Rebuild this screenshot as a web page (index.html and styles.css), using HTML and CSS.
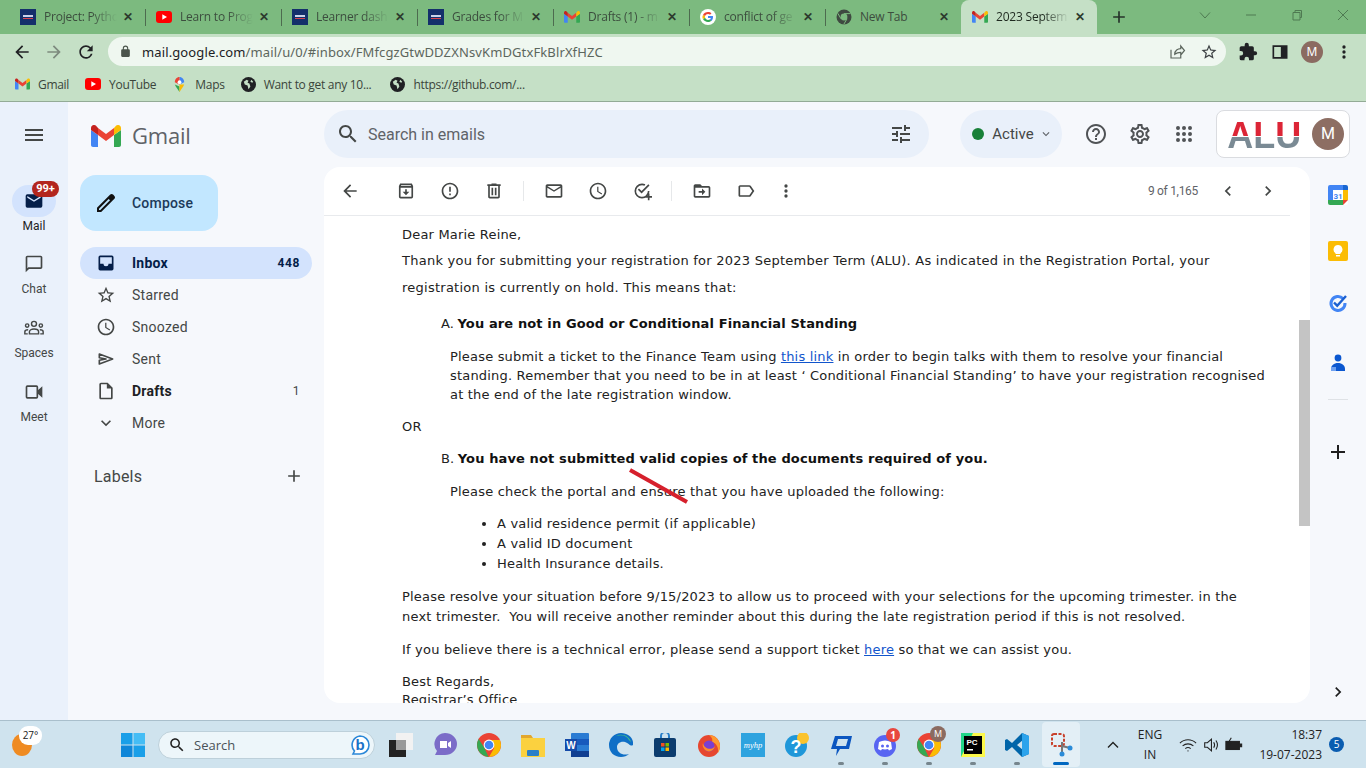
FILE: index.html
```html
<!DOCTYPE html>
<html lang="en">
<head>
  <meta charset="UTF-8" />
  <meta name="viewport" content="width=device-width, initial-scale=1" />
  <title>2023 September Term - Gmail</title>
  <link rel="stylesheet" href="styles.css">
</head>
<body>

  <svg class="sprite" aria-hidden="true">
    <symbol id="i-gmail" viewBox="0 0 30 22">
      <path fill="#4285f4" d="M2 22h5V10L0 5v15c0 1.1.9 2 2 2z"/>
      <path fill="#34a853" d="M23 22h5c1.1 0 2-.9 2-2V5l-7 5z"/>
      <path fill="#ea4335" d="M7 10V3l8 6 8-6v7l-8 6z"/>
      <path fill="#fbbc04" d="M23 3v7l7-5V3c0-2.5-2.8-3.9-4.8-2.4z"/>
      <path fill="#c5221f" d="M0 5l7 5V3L4.8.6C2.8-.9 0 .5 0 3z"/>
    </symbol>
    <symbol id="i-alu" viewBox="0 0 16 16">
      <rect width="16" height="16" fill="#14306b"/>
      <rect x="3" y="6" width="10" height="2" fill="#c9d3ea"/>
      <rect x="3" y="9" width="10" height="1" fill="#d9434e"/>
    </symbol>
    <symbol id="i-yt" viewBox="0 0 16 12">
      <rect width="16" height="12" rx="3" fill="#f00"/>
      <path fill="#fff" d="M6.3 3.3v5.4L11 6z"/>
    </symbol>
    <symbol id="i-google" viewBox="0 0 16 16">
      <circle cx="8" cy="8" r="8" fill="#fff"/>
      <path fill="#4285f4" d="M13 8.1c0-.4 0-.8-.1-1.100H8v2.100h2.800c-.1.7-.5 1.200-1 1.600l1.600 1.300c1-.9 1.600-2.200 1.600-3.900z"/>
      <path fill="#34a853" d="M8 13c1.400 0 2.500-.5 3.400-1.300l-1.600-1.300c-.5.3-1.100.5-1.800.5-1.300 0-2.500-.9-2.900-2.100L3 10.100C3.800 11.800 5.800 13 8 13z"/>
      <path fill="#fbbc05" d="M5.100 8.800C4.900 8.200 4.900 7.700 5.100 7.100L3 5.900c-.7 1.300-.7 2.900 0 4.200z"/>
      <path fill="#ea4335" d="M8 5c.8 0 1.500.3 2 .8l1.500-1.500C10.600 3.500 9.400 3 8 3 5.800 3 3.800 4.200 3 5.900l2.100 1.200C5.500 5.900 6.700 5 8 5z"/>
    </symbol>
    <symbol id="i-chromegray" viewBox="0 0 16 16">
      <circle cx="8" cy="8" r="7.5" fill="#3f4a41"/>
      <circle cx="8" cy="8" r="3.4" fill="#7cba7f"/>
      <path d="M8 4.600h6.500M5 9.800 1.800 4.300M11 9.800 7.800 15.300" stroke="#7cba7f" stroke-width="1"/>
    </symbol>
    <symbol id="i-globe" viewBox="0 0 16 16">
      <circle cx="8" cy="8" r="8" fill="#202124"/>
      <path fill="#c5e0c6" d="M3 5l3-2 2 1-1 2 2 1 1 3-2 3-1-4-3-1zM11 3l2 2-1 1-2-1z"/>
    </symbol>
    <symbol id="i-chrome" viewBox="0 0 24 24">
      <circle cx="12" cy="12" r="12" fill="#ea4335"/>
      <path fill="#34a853" d="M1.600 6 7.500 15l4 8.900A12 12 0 0 1 1.600 6z"/>
      <path fill="#fbbc04" d="M12 24 17.200 15 12 7h10.900A12 12 0 0 1 12 24z"/>
      <circle cx="12" cy="12" r="5.4" fill="#fff"/>
      <circle cx="12" cy="12" r="4.3" fill="#4285f4"/>
    </symbol>
    <symbol id="i-search" viewBox="0 0 24 24"><path d="M15.5 14h-.79l-.28-.27C15.41 12.59 16 11.11 16 9.5 16 5.91 13.09 3 9.5 3S3 5.91 3 9.5 5.91 16 9.5 16c1.61 0 3.09-.59 4.23-1.57l.27.28v.79l5 4.99L20.49 19l-4.99-5zm-6 0C7.01 14 5 11.99 5 9.5S7.01 5 9.5 5 14 7.01 14 9.5 11.99 14 9.5 14z"/></symbol>
    <symbol id="i-tune" viewBox="0 0 24 24"><path d="M3 17v2h6v-2H3zM3 5v2h10V5H3zm10 16v-2h8v-2h-8v-2h-2v6h2zM7 9v2H3v2h4v2h2V9H7zm14 4v-2H11v2h10zm-6-4h2V7h4V5h-4V3h-2v6z"/></symbol>
    <symbol id="i-help" viewBox="0 0 24 24"><path d="M11 18h2v-2h-2v2zm1-16C6.48 2 2 6.48 2 12s4.48 10 10 10 10-4.48 10-10S17.52 2 12 2zm0 18c-4.41 0-8-3.59-8-8s3.59-8 8-8 8 3.59 8 8-3.59 8-8 8zm0-14c-2.21 0-4 1.79-4 4h2c0-1.1.9-2 2-2s2 .9 2 2c0 2-3 1.75-3 5h2c0-2.25 3-2.5 3-5 0-2.21-1.79-4-4-4z"/></symbol>
    <symbol id="i-gear" viewBox="0 0 24 24"><path d="M19.43 12.98c.04-.32.07-.64.07-.98 0-.34-.03-.66-.07-.98l2.11-1.65c.19-.15.24-.42.12-.64l-2-3.46c-.09-.16-.26-.25-.44-.25-.06 0-.12.01-.17.03l-2.49 1c-.52-.4-1.08-.73-1.69-.98l-.38-2.65C14.46 2.18 14.25 2 14 2h-4c-.25 0-.46.18-.49.42l-.38 2.65c-.61.25-1.17.59-1.69.98l-2.49-1c-.06-.02-.12-.03-.18-.03-.17 0-.34.09-.43.25l-2 3.46c-.13.22-.07.49.12.64l2.11 1.65c-.04.32-.07.65-.07.98 0 .33.03.66.07.98l-2.11 1.65c-.19.15-.24.42-.12.64l2 3.46c.09.16.26.25.44.25.06 0 .12-.01.17-.03l2.49-1c.52.4 1.08.73 1.69.98l.38 2.65c.03.24.24.42.49.42h4c.25 0 .46-.18.49-.42l.38-2.65c.61-.25 1.17-.59 1.69-.98l2.49 1c.06.02.12.03.18.03.17 0 .34-.09.43-.25l2-3.46c.12-.22.07-.49-.12-.64l-2.11-1.65zm-1.98-1.71c.04.31.05.52.05.73 0 .21-.02.43-.05.73l-.14 1.13.89.7 1.08.84-.7 1.21-1.27-.51-1.04-.42-.9.68c-.43.32-.84.56-1.25.73l-1.06.43-.16 1.13-.2 1.35h-1.4l-.19-1.35-.16-1.13-1.06-.43c-.43-.18-.83-.41-1.23-.71l-.91-.7-1.06.43-1.27.51-.7-1.21 1.08-.84.89-.7-.14-1.13c-.03-.31-.05-.54-.05-.74s.02-.43.05-.73l.14-1.13-.89-.7-1.08-.84.7-1.21 1.27.51 1.04.42.9-.68c.43-.32.84-.56 1.25-.73l1.06-.43.16-1.13.2-1.35h1.39l.19 1.35.16 1.13 1.06.43c.43.18.83.41 1.23.71l.91.7 1.06-.43 1.27-.51.7 1.21-1.07.85-.89.7.14 1.13zM12 8c-2.21 0-4 1.79-4 4s1.79 4 4 4 4-1.79 4-4-1.79-4-4-4zm0 6c-1.1 0-2-.9-2-2s.9-2 2-2 2 .9 2 2-.9 2-2 2z"/></symbol>
    <symbol id="i-apps" viewBox="0 0 24 24"><path d="M6 8a2 2 0 1 0 0-4 2 2 0 0 0 0 4zm6 0a2 2 0 1 0 0-4 2 2 0 0 0 0 4zm6 0a2 2 0 1 0 0-4 2 2 0 0 0 0 4zM6 14a2 2 0 1 0 0-4 2 2 0 0 0 0 4zm6 0a2 2 0 1 0 0-4 2 2 0 0 0 0 4zm6 0a2 2 0 1 0 0-4 2 2 0 0 0 0 4zM6 20a2 2 0 1 0 0-4 2 2 0 0 0 0 4zm6 0a2 2 0 1 0 0-4 2 2 0 0 0 0 4zm6 0a2 2 0 1 0 0-4 2 2 0 0 0 0 4z"/></symbol>
    <symbol id="i-menu" viewBox="0 0 24 24"><path d="M3 18h18v-2H3v2zm0-5h18v-2H3v2zm0-7v2h18V6H3z"/></symbol>
    <symbol id="i-back" viewBox="0 0 24 24"><path d="M20 11H7.83l5.59-5.59L12 4l-8 8 8 8 1.41-1.41L7.83 13H20v-2z"/></symbol>
    <symbol id="i-archive" viewBox="0 0 24 24"><path d="M5 3h14l1.500 3v13a2 2 0 0 1-2 2h-13a2 2 0 0 1-2-2V6zM5.500 8v11h13V8zm.3-2h12.400l-.5-1H6.300zM11 10h2v3h3l-4 4-4-4h3z"/></symbol>
    <symbol id="i-report" viewBox="0 0 24 24"><path d="M11 15h2v2h-2zm0-8h2v6h-2zm1-5C6.47 2 2 6.48 2 12s4.47 10 10 10 10-4.48 10-10S17.53 2 12 2zm0 18c-4.42 0-8-3.58-8-8s3.58-8 8-8 8 3.58 8 8-3.58 8-8 8z"/></symbol>
    <symbol id="i-delete" viewBox="0 0 24 24"><path d="M15 4V3H9v1H4v2h1v13c0 1.1.9 2 2 2h10c1.1 0 2-.9 2-2V6h1V4h-5zm2 15H7V6h10v13zM9 8h2v9H9zm4 0h2v9h-2z"/></symbol>
    <symbol id="i-mail" viewBox="0 0 24 24"><path d="M20 4H4c-1.1 0-2 .9-2 2v12c0 1.1.9 2 2 2h16c1.1 0 2-.9 2-2V6c0-1.1-.9-2-2-2zm0 14H4V8l8 5 8-5v10zm-8-7L4 6h16l-8 5z"/></symbol>
    <symbol id="i-clock" viewBox="0 0 24 24"><path d="M11.99 2C6.47 2 2 6.48 2 12s4.47 10 9.990 10C17.52 22 22 17.52 22 12S17.52 2 11.990 2zM12 20c-4.420 0-8-3.580-8-8s3.580-8 8-8 8 3.580 8 8-3.580 8-8 8zm.5-13H11v6l5.250 3.150.75-1.230-4.500-2.670z"/></symbol>
    <symbol id="i-addtask" viewBox="0 0 24 24"><path d="M12 3a9 9 0 0 1 4 .9l-1 1.800A7 7 0 1 0 19 12h2a9 9 0 0 1-9 9 9 9 0 0 1 0-18zm7.600 1L21 5.400l-9.500 9.500L7 10.400 8.400 9l3.100 3.100zM19 15h2v3h3v2h-3v3h-2v-3h-3v-2h3z"/></symbol>
    <symbol id="i-move" viewBox="0 0 24 24"><path d="M20 6h-8l-2-2H4c-1.1 0-2 .9-2 2v12c0 1.1.9 2 2 2h16c1.1 0 2-.9 2-2V8c0-1.1-.9-2-2-2zm0 12H4V8h16v10zm-8-1 4-4-4-4v3H8v2h4z"/></symbol>
    <symbol id="i-label" viewBox="0 0 24 24"><path d="M17.63 5.84C17.27 5.33 16.67 5 16 5L5 5.010C3.900 5.010 3 5.900 3 7v10c0 1.100.9 1.990 2 1.990L16 19c.67 0 1.270-.33 1.630-.84L22 12l-4.370-6.160zM16 17H5V7h11l3.550 5L16 17z"/></symbol>
    <symbol id="i-more" viewBox="0 0 24 24"><path d="M12 8a2 2 0 1 0 0-4 2 2 0 0 0 0 4zm0 2a2 2 0 1 0 0 4 2 2 0 0 0 0-4zm0 6a2 2 0 1 0 0 4 2 2 0 0 0 0-4z"/></symbol>
    <symbol id="i-left" viewBox="0 0 24 24"><path d="M15.41 7.41 14 6l-6 6 6 6 1.41-1.41L10.83 12z"/></symbol>
    <symbol id="i-right" viewBox="0 0 24 24"><path d="M10 6 8.590 7.410 13.170 12l-4.580 4.590L10 18l6-6z"/></symbol>
    <symbol id="i-down" viewBox="0 0 24 24"><path d="M16.59 8.590 12 13.170 7.410 8.590 6 10l6 6 6-6z"/></symbol>
    <symbol id="i-plus" viewBox="0 0 24 24"><path d="M19 13h-6v6h-2v-6H5v-2h6V5h2v6h6v2z"/></symbol>
    <symbol id="i-pencil" viewBox="0 0 24 24"><path d="M20.41 4.940l-1.350-1.350c-.78-.78-2.050-.78-2.830 0L3 16.820V21h4.180L20.410 7.770c.79-.78.79-2.050 0-2.830zM6.350 19H5v-1.350l9.660-9.660 1.350 1.350L6.350 19z"/></symbol>
    <symbol id="i-inbox" viewBox="0 0 24 24"><path d="M19 3H5a2 2 0 0 0-2 2v14a2 2 0 0 0 2 2h14a2 2 0 0 0 2-2V5a2 2 0 0 0-2-2zm0 10h-4a3 3 0 0 1-6 0H5V5h14z"/></symbol>
    <symbol id="i-star" viewBox="0 0 24 24"><path d="M22 9.240l-7.190-.62L12 2 9.190 8.630 2 9.240l5.460 4.730L5.820 21 12 17.270 18.180 21l-1.630-7.030L22 9.240zM12 15.400l-3.760 2.270 1-4.280-3.320-2.880 4.380-.38L12 6.100l1.710 4.040 4.380.38-3.320 2.880 1 4.280L12 15.400z"/></symbol>
    <symbol id="i-sent" viewBox="0 0 24 24"><path fill="none" stroke="#444746" stroke-width="2" stroke-linejoin="round" d="M4 6 20 12 4 18v-4.500L12 12 4 10.500z"/></symbol>
    <symbol id="i-draft" viewBox="0 0 24 24"><path d="M14 2H6c-1.1 0-2 .9-2 2v16c0 1.1.9 2 2 2h12c1.1 0 2-.9 2-2V8l-6-6zM6 20V4h7v5h5v11H6z"/></symbol>
    <symbol id="i-mailfill" viewBox="0 0 24 24"><path d="M20 4H4a2 2 0 0 0-2 2v12a2 2 0 0 0 2 2h16a2 2 0 0 0 2-2V6a2 2 0 0 0-2-2zm0 4-8 5-8-5V6l8 5 8-5z"/></symbol>
    <symbol id="i-chat" viewBox="0 0 24 24"><path d="M20 2H4c-1.1 0-2 .9-2 2v18l4-4h14c1.1 0 2-.9 2-2V4c0-1.1-.9-2-2-2zm0 14H5.170L4 17.170V4h16v12z"/></symbol>
    <symbol id="i-spaces" viewBox="0 0 24 24">
      <g fill="none" stroke="#444746" stroke-width="1.700">
        <circle cx="12" cy="7" r="3"/><circle cx="3.800" cy="9" r="2"/><circle cx="20.200" cy="9" r="2"/>
        <path d="M6.500 19v-2.500c0-2 2.500-3.300 5.500-3.300s5.500 1.300 5.500 3.300V19zM4.500 19H1v-2.500c0-1.500 1.500-2.500 4-2.500M19.500 19H23v-2.500c0-1.500-1.500-2.500-4-2.500"/>
      </g>
    </symbol>
    <symbol id="i-video" viewBox="0 0 24 24"><path d="M15 4H4a2 2 0 0 0-2 2v12a2 2 0 0 0 2 2h11a2 2 0 0 0 2-2v-3.500l5 4.500V5l-5 4.500V6a2 2 0 0 0-2-2zM4 6h11v12H4z"/></symbol>
    <symbol id="i-lock" viewBox="0 0 24 24"><path d="M18 8h-1V6a5 5 0 0 0-10 0v2H6a2 2 0 0 0-2 2v10a2 2 0 0 0 2 2h12a2 2 0 0 0 2-2V10a2 2 0 0 0-2-2zM9 6a3 3 0 0 1 6 0v2H9z"/></symbol>
    <symbol id="i-reload" viewBox="0 0 24 24"><path d="M17.65 6.350A7.958 7.958 0 0 0 12 4c-4.420 0-7.990 3.580-7.990 8s3.570 8 7.990 8c3.730 0 6.840-2.550 7.730-6h-2.080A5.990 5.990 0 0 1 12 18c-3.310 0-6-2.690-6-6s2.690-6 6-6c1.660 0 3.140.69 4.220 1.780L13 11h7V4l-2.350 2.350z"/></symbol>
    <symbol id="i-share" viewBox="0 0 24 24"><path d="M4 9v11h13v-5M9 15c0-5 4-7.500 8-7.500V4l5 6-5 6v-3.500c-3.500 0-6 1-8 2.500z" fill="none" stroke="currentColor" stroke-width="1.600"/></symbol>
    <symbol id="i-puzzle" viewBox="0 0 24 24"><path d="M20.500 11H19V7a2 2 0 0 0-2-2h-4V3.500a2.500 2.500 0 0 0-5 0V5H4a2 2 0 0 0-2 2v3.800h1.500a2.700 2.700 0 0 1 0 5.400H2V20a2 2 0 0 0 2 2h3.800v-1.500a2.700 2.700 0 0 1 5.400 0V22H17a2 2 0 0 0 2-2v-4h1.500a2.500 2.500 0 0 0 0-5z"/></symbol>
    <symbol id="i-panel" viewBox="0 0 24 24"><path d="M3 4h18v16H3zm2 2v12h8V6z" fill-rule="evenodd"/></symbol>
  </svg>

  <!-- barra de pestañas -->
  <div class="tabstrip">
    <div class="tab"><svg class="tab-icon"><use href="#i-alu"/></svg><span class="tab-title">Project: Pytho</span><span class="tab-close">✕</span></div>
    <div class="tab"><svg class="tab-icon"><use href="#i-yt"/></svg><span class="tab-title">Learn to Prog</span><span class="tab-close">✕</span></div>
    <div class="tab"><svg class="tab-icon"><use href="#i-alu"/></svg><span class="tab-title">Learner dash</span><span class="tab-close">✕</span></div>
    <div class="tab"><svg class="tab-icon"><use href="#i-alu"/></svg><span class="tab-title">Grades for M</span><span class="tab-close">✕</span></div>
    <div class="tab"><svg class="tab-icon"><use href="#i-gmail"/></svg><span class="tab-title">Drafts (1) - m</span><span class="tab-close">✕</span></div>
    <div class="tab"><svg class="tab-icon"><use href="#i-google"/></svg><span class="tab-title">conflict of ge</span><span class="tab-close">✕</span></div>
    <div class="tab tab-plain"><svg class="tab-icon"><use href="#i-chromegray"/></svg><span class="tab-title">New Tab</span><span class="tab-close">✕</span></div>
    <div class="tab tab-active"><svg class="tab-icon"><use href="#i-gmail"/></svg><span class="tab-title">2023 Septem</span><span class="tab-close">✕</span></div>
    <svg class="tab-new"><use href="#i-plus"/></svg>
    <div class="win-controls">
      <svg class="win-btn" viewBox="0 0 12 12"><path d="M1 3.500 6 9l5-5.500"/></svg>
      <svg class="win-btn" viewBox="0 0 12 12"><path d="M1 6h10"/></svg>
      <svg class="win-btn" viewBox="0 0 12 12"><path d="M2 3.500h7v7.500H2zM4 3.500V1.500h6.500v7H9"/></svg>
      <svg class="win-btn" viewBox="0 0 12 12"><path d="M1 1l10 10M11 1 1 11"/></svg>
    </div>
  </div>

  <div class="toolbar">
    <svg class="tb-icon"><use href="#i-back"/></svg>
    <svg class="tb-icon tb-muted"><use href="#i-back"/></svg>
    <svg class="tb-icon"><use href="#i-reload"/></svg>
    <div class="omnibox">
      <svg class="omni-lock"><use href="#i-lock"/></svg>
      <span class="omni-url"><b>mail.google.com</b>/mail/u/0/#inbox/FMfcgzGtwDDZXNsvKmDGtxFkBlrXfHZC</span>
      <svg class="omni-icon"><use href="#i-share"/></svg>
      <svg class="omni-icon"><use href="#i-star"/></svg>
    </div>
    <svg class="tb-icon"><use href="#i-puzzle"/></svg>
    <svg class="tb-icon"><use href="#i-panel"/></svg>
    <span class="tb-avatar">M</span>
    <svg class="tb-icon"><use href="#i-more"/></svg>
  </div>

  <div class="bookmarks">
    <a class="bm"><svg class="bm-gmail"><use href="#i-gmail"/></svg>Gmail</a>
    <a class="bm"><svg class="bm-yt"><use href="#i-yt"/></svg>YouTube</a>
    <a class="bm">
      <svg class="bm-icon" viewBox="0 0 16 16"><path fill="#34a853" d="M8 16c-1-2-4-5-5-8l5 2z"/><path fill="#fbbc04" d="M8 16c1-2 4-5 5-8L8 8z"/><path fill="#4285f4" d="M8 0c2 0 5 2 5 5.500L8 8z"/><path fill="#ea4335" d="M8 0C5 0 3 2.500 3 5.500L8 8z"/><circle cx="8" cy="5.500" r="2" fill="#fff"/></svg>
      Maps</a>
    <a class="bm bm-wide"><svg class="bm-icon"><use href="#i-globe"/></svg>Want to get any 10...</a>
    <a class="bm"><svg class="bm-icon"><use href="#i-globe"/></svg>https://github.com/...</a>
  </div>

  <!-- gmail -->
  <div class="gmail">
    <nav class="rail">
      <svg class="rail-burger"><use href="#i-menu"/></svg>
      <div class="rail-item rail-on">
        <div class="rail-pill"><svg><use href="#i-mailfill"/></svg><span class="rail-badge">99+</span></div>
        <span>Mail</span>
      </div>
      <div class="rail-item"><div class="rail-pill"><svg><use href="#i-chat"/></svg></div><span>Chat</span></div>
      <div class="rail-item"><div class="rail-pill"><svg><use href="#i-spaces"/></svg></div><span>Spaces</span></div>
      <div class="rail-item"><div class="rail-pill"><svg><use href="#i-video"/></svg></div><span>Meet</span></div>
    </nav>

    <aside class="sidebar">
      <div class="brand"><svg class="brand-m"><use href="#i-gmail"/></svg><span>Gmail</span></div>
      <div class="compose"><svg><use href="#i-pencil"/></svg>Compose</div>
      <ul class="folders">
        <li class="folder folder-on"><svg><use href="#i-inbox"/></svg><span>Inbox</span><em>448</em></li>
        <li class="folder"><svg><use href="#i-star"/></svg><span>Starred</span></li>
        <li class="folder"><svg><use href="#i-clock"/></svg><span>Snoozed</span></li>
        <li class="folder"><svg><use href="#i-sent"/></svg><span>Sent</span></li>
        <li class="folder folder-bold"><svg><use href="#i-draft"/></svg><span>Drafts</span><em>1</em></li>
        <li class="folder"><svg><use href="#i-down"/></svg><span>More</span></li>
      </ul>
      <div class="labels"><span>Labels</span><svg><use href="#i-plus"/></svg></div>
    </aside>

    <div class="main">
      <header class="topbar">
        <div class="searchbox">
          <svg class="search-icon"><use href="#i-search"/></svg>
          <span class="search-text">Search in emails</span>
          <svg class="search-tune"><use href="#i-tune"/></svg>
        </div>
        <div class="status"><i class="status-dot"></i>Active<svg><use href="#i-down"/></svg></div>
        <svg class="top-icon"><use href="#i-help"/></svg>
        <svg class="top-icon"><use href="#i-gear"/></svg>
        <svg class="top-icon"><use href="#i-apps"/></svg>
        <div class="account"><span class="alu-logo">ALU</span><span class="account-avatar">M</span></div>
      </header>

      <div class="content">
        <section class="card">
          <div class="card-left">
            <div class="msg-tools">
              <svg><use href="#i-back"/></svg>
              <svg class="t-first"><use href="#i-archive"/></svg>
              <svg><use href="#i-report"/></svg>
              <svg><use href="#i-delete"/></svg>
              <i class="t-sep"></i>
              <svg><use href="#i-mail"/></svg>
              <svg><use href="#i-clock"/></svg>
              <svg><use href="#i-addtask"/></svg>
              <i class="t-sep"></i>
              <svg><use href="#i-move"/></svg>
              <svg><use href="#i-label"/></svg>
              <svg class="t-more"><use href="#i-more"/></svg>
              <span class="t-count">9 of 1,165</span>
              <svg class="t-nav"><use href="#i-left"/></svg>
              <svg class="t-nav"><use href="#i-right"/></svg>
            </div>
            <article class="msg-body">
              <p class="p-dear">Dear Marie Reine,</p>
              <p class="p-intro">Thank you for submitting your registration for 2023 September Term (ALU). As indicated in the Registration Portal, your registration is currently on hold. This means that:</p>
              <p class="p-head">A. <b>You are not in Good or Conditional Financial Standing</b></p>
              <p class="p-indent">Please submit a ticket to the Finance Team using <a href="#">this link</a> in order to begin talks with them to resolve your financial standing. Remember that you need to be in at least ‘ Conditional Financial Standing’ to have your registration recognised at the end of the late registration window.</p>
              <p class="p-or">OR</p>
              <p class="p-head p-head-b">B. <b>You have not submitted valid copies of the documents required of you.</b></p>
              <p class="p-indent">Please check the portal and ensure that you have uploaded the following:</p>
              <ul class="docs">
                <li>A valid residence permit (if applicable)</li>
                <li>A valid ID document</li>
                <li>Health Insurance details.</li>
              </ul>
              <p class="p-wide">Please resolve your situation before 9/15/2023 to allow us to proceed with your selections for the upcoming trimester. in the next trimester.&nbsp; You will receive another reminder about this during the late registration period if this is not resolved.</p>
              <p class="p-wide">If you believe there is a technical error, please send a support ticket <a href="#">here</a> so that we can assist you.</p>
              <p class="p-sign">Best Regards,<br>Registrar’s Office</p>
            </article>
          </div>
          <div class="scroll-track"><div class="scroll-thumb"></div></div>
          <svg class="red-mark" viewBox="0 0 60 36"><path d="M2 2 59 34"/></svg>
        </section>

        <aside class="addons">
          <svg class="addon" viewBox="0 0 20 20">
            <rect width="20" height="20" rx="2" fill="#fff"/>
            <path fill="#4285f4" d="M2 0h13v5H5v10H0V2a2 2 0 0 1 2-2z"/>
            <path fill="#fbbc04" d="M15 5h5v10h-5z"/>
            <path fill="#34a853" d="M0 15h15v5H2a2 2 0 0 1-2-2z"/>
            <path fill="#1967d2" d="M15 0h3a2 2 0 0 1 2 2v3h-5z"/>
            <path fill="#ea4335" d="M15 15h5l-5 5z"/>
            <text x="10" y="13.5" class="cal-num">31</text>
          </svg>
          <svg class="addon addon-keep" viewBox="0 0 20 20">
            <rect width="20" height="20" rx="2" fill="#fbbc04"/>
            <path fill="#fff" d="M10 4a4.500 4.500 0 0 0-2.500 8.200V13h5v-.8A4.500 4.500 0 0 0 10 4zM8 14h4v1.500H8z"/>
          </svg>
          <svg class="addon addon-tasks" viewBox="0 0 20 20">
            <path fill="none" stroke="#4285f4" stroke-width="3" d="M15 5.500A7 7 0 1 0 17 10"/>
            <path fill="none" stroke="#1a5fd0" stroke-width="2.400" d="m6 9.500 3.200 3.200L18 3"/>
          </svg>
          <svg class="addon addon-people" viewBox="0 0 20 20">
            <circle cx="10" cy="5" r="3.400" fill="#0b57d0"/>
            <path fill="#0b57d0" d="M3 16c0-3.500 3-6 7-6s7 2.500 7 6v2H3z"/>
            <path fill="#6ea0f0" d="M3 14h5v4H3z"/>
          </svg>
          <i class="addon-sep"></i>
          <svg class="addon-plus"><use href="#i-plus"/></svg>
          <svg class="addon-more"><use href="#i-right"/></svg>
        </aside>
      </div>
    </div>
  </div>

  <!-- barra de tareas -->
  <footer class="taskbar">
    <div class="weather"><i class="sun"></i><span class="temp">27°</span></div>
    <svg class="start" viewBox="0 0 24 24"><path fill="#1a9fe8" d="M0 0h11.500v11.500H0z"/><path fill="#45bdf5" d="M12.500 0H24v11.500H12.500z"/><path fill="#0f86d8" d="M0 12.500h11.500V24H0z"/><path fill="#1a9fe8" d="M12.500 12.500H24V24H12.500z"/></svg>
    <div class="tb-search">
      <svg><use href="#i-search"/></svg><span>Search</span>
      <svg class="bing" viewBox="0 0 20 22"><path d="M10 2a9 9 0 0 1 0 18H3l1.500-3A9 9 0 0 1 10 2z" fill="#fff" stroke="#2b88d8" stroke-width="1.600"/><text x="10" y="16" class="bing-b">b</text></svg>
    </div>
    <div class="apps">
      <span class="app"><svg viewBox="0 0 24 24"><rect x="7" y="0" width="17" height="17" fill="#f2f2f2"/><rect x="0" y="7" width="17" height="17" fill="#222"/><rect x="7" y="7" width="10" height="10" fill="#999"/></svg></span>
      <span class="app"><svg viewBox="0 0 24 24"><path fill="#7b6cc8" d="M12 0a12 11 0 0 1 0 22H2l2-4a11 11 0 0 1 8-18z"/><path fill="#fff" d="M7 8h7v7H7zm8 2 3-2v7l-3-2z"/></svg></span>
      <span class="app"><svg><use href="#i-chrome"/></svg></span>
      <span class="app"><svg viewBox="0 0 24 24"><path fill="#e2a72e" d="M0 2h10l2 3h12v19H0z"/><path fill="#fbd13f" d="M0 5h24v19H0z"/><rect x="6" y="17" width="12" height="6" rx="1" fill="#2a7fc9"/></svg></span>
      <span class="app"><svg viewBox="0 0 24 24"><rect x="6" width="18" height="24" rx="1" fill="#2b7cd3"/><rect x="6" y="6" width="18" height="6" fill="#185abd"/><rect x="6" y="18" width="18" height="6" fill="#103f91"/><rect y="6" width="12" height="12" fill="#144aa8"/><text x="6" y="15.5" class="word-w">W</text></svg></span>
      <span class="app"><svg viewBox="0 0 24 24"><path fill="#0f6fc6" d="M12 0a12 12 0 0 0-12 12c0 7 5 12 12 12 3 0 6-1 8-3-6 2-12-1-12-7 0-3 3-6 8-5 4 1 5 5 8 3 1-7-5-12-12-12z"/><path fill="#4ad07a" d="M22 9c-2-6-9-9-15-6 6-2 11 0 13 4z"/></svg></span>
      <span class="app"><svg viewBox="0 0 24 24"><path d="M8 5V3a4 4 0 0 1 8 0v2" fill="none" stroke="#2a7fc9" stroke-width="2"/><rect x="1" y="5" width="22" height="19" rx="2" fill="#0c3c6e"/><path fill="#f25022" d="M8 10h3.500v3.500H8z"/><path fill="#7fba00" d="M12.500 10H16v3.500h-3.500z"/><path fill="#00a4ef" d="M8 14.500h3.500V18H8z"/><path fill="#ffb900" d="M12.500 14.500H16V18h-3.500z"/></svg></span>
      <span class="app"><svg viewBox="0 0 24 24"><circle cx="12" cy="13" r="11" fill="#e6472f"/><path fill="#ff9a2e" d="M12 2c6 0 11 5 11 11 0 3-1 5-2 7 1-6-2-10-6-11 1-2 0-5-3-7z"/><circle cx="12" cy="13" r="5.500" fill="#7a3fd0"/><path fill="#ff8a2a" d="M6 10c1 6 9 8 12 3-1 5-6 7-10 4-2-2-3-5-2-7z"/></svg></span>
      <span class="app"><svg viewBox="0 0 24 24"><rect width="24" height="24" fill="#2ea3df"/><text x="12" y="15" class="myhp">myhp</text></svg></span>
      <span class="app"><svg viewBox="0 0 24 24"><circle cx="11" cy="13" r="11" fill="#1f97d9"/><circle cx="18" cy="5" r="6" fill="#fbc32d"/><text x="11" y="20" class="help-q">?</text></svg></span>
      <span class="app app-run"><svg viewBox="0 0 24 24"><path fill="#0b56c0" d="M6 3h17l-3 13H11l-4 7 1-7H2zm3 3-2 7h10l2-7z" fill-rule="evenodd"/></svg></span>
      <span class="app app-run"><svg viewBox="0 0 24 24"><circle cx="12" cy="13" r="11" fill="#5865f2"/><path fill="#fff" d="M6 9c4-2 8-2 12 0l1 7-3 1.500-1-1.500c-2 .6-4 .6-6 0l-1 1.500L5 16z"/><circle cx="9.500" cy="13" r="1.500" fill="#5865f2"/><circle cx="14.500" cy="13" r="1.500" fill="#5865f2"/></svg><b class="app-badge">1</b></span>
      <span class="app app-run"><svg><use href="#i-chrome"/></svg><b class="app-badge app-badge-m">M</b></span>
      <span class="app app-run"><svg viewBox="0 0 24 24"><rect width="24" height="24" fill="#21d789"/><path fill="#fcf84a" d="M12 0h12v24H0z"/><rect x="3" y="3" width="18" height="18" fill="#000"/><rect x="6" y="16" width="6" height="1.500" fill="#fff"/><text x="5.500" y="12" class="pc-txt">PC</text></svg></span>
      <span class="app app-run"><svg viewBox="0 0 24 24"><path fill="#0065a9" d="M17 0 7 10 2 6 0 7v10l2 1 5-4 10 10 7-3V3zm1 7v10l-6-5z" fill-rule="evenodd"/><path fill="#2ba3ec" d="M17 0l7 3v18l-7 3z"/></svg></span>
      <span class="app app-snip"><svg viewBox="0 0 24 24"><rect x="3" y="1" width="12" height="12" rx="2" fill="none" stroke="#c8412c" stroke-width="2" stroke-dasharray="3 1.500"/><path d="M13 9v11M13 13l8 2" stroke="#777" stroke-width="2"/><circle cx="21" cy="15" r="2.500" fill="#2a8bd8"/><circle cx="13" cy="21" r="2.500" fill="#2a8bd8"/></svg><i class="snip-line"></i></span>
    </div>
    <div class="tray">
      <svg class="tray-caret" viewBox="0 0 12 12"><path d="M1 8.500 6 3.500l5 5"/></svg>
      <div class="tray-lang">ENG<br>IN</div>
      <svg class="tray-icon" viewBox="0 0 20 20"><path d="M1 8c5-5 13-5 18 0M4 11c3.500-3 8.500-3 12 0M7 14c1.800-1.500 4.200-1.500 6 0M9.500 16.500h1"/></svg>
      <svg class="tray-icon" viewBox="0 0 20 20"><path d="M3 7.500h3l4.500-4v13l-4.500-4H3zM13 7c1 1.500 1 4.500 0 6M15.500 5c2 3 2 7 0 10"/></svg>
      <svg class="tray-icon" viewBox="0 0 20 20"><rect x="1" y="6" width="15" height="9" fill="#222"/><path d="M16.500 9v3h2V9z" fill="#222"/><path d="M7 2 4 7h3l-1 3" stroke="#222"/></svg>
      <div class="tray-clock">18:37<br>19-07-2023</div>
      <span class="tray-badge">5</span>
    </div>
  </footer>

</body>
</html>
```

FILE: styles.css
```css
* {
  box-sizing: border-box;
}

html, body {
  margin: 0;
  height: 768px;
  overflow: hidden;
}

body {
  display: flex;
  flex-direction: column;
  width: 1366px;
  font-family: "Noto Sans", sans-serif;
  background: #f6f8fc;
}

.sprite {
  display: none;
}

/* pestañas */
.tabstrip {
  height: 34px;
  flex: none;
  display: flex;
  align-items: stretch;
  background: #7cba7f;
  padding-left: 9px;
}

.tab {
  width: 136px;
  flex: none;
  display: flex;
  align-items: center;
  padding: 0 9px 1px 11px;
  font-family: "Open Sans", sans-serif;
  font-size: 12px;
  letter-spacing: -0.2px;
  color: #3c4d3e;
  position: relative;
}

.tab + .tab::before {
  content: "";
  position: absolute;
  left: 0;
  top: 9px;
  height: 17px;
  width: 1px;
  background: #4d6b4f;
}

.tab-icon {
  width: 16px;
  height: 16px;
  flex: none;
  margin-right: 8px;
}

.tab-title {
  flex: 1;
  white-space: nowrap;
  overflow: hidden;
  -webkit-mask-image: linear-gradient(90deg, #000 62%, transparent 96%);
  mask-image: linear-gradient(90deg, #000 62%, transparent 96%);
}

.tab-plain .tab-title {
  -webkit-mask-image: none;
  mask-image: none;
}

.tab-close {
  width: 16px;
  flex: none;
  font-size: 12px;
  font-weight: 700;
  color: #2c3b2d;
  text-align: center;
}

.tab-active {
  background: #c5e0c6;
  border-radius: 8px 8px 0 0;
  color: #1f2a20;
}

.tab-active::before {
  display: none;
}

.tab-new {
  width: 20px;
  height: 20px;
  flex: none;
  align-self: center;
  fill: #26332a;
  margin-left: 12px;
}

.win-controls {
  margin-left: auto;
  display: flex;
  align-items: center;
  gap: 34px;
  padding: 0 17px 5px 0;
}

.win-btn {
  width: 12px;
  height: 12px;
  fill: none;
  stroke: #4f7a52;
  stroke-width: 1;
}

/* barra de dirección */
.toolbar {
  height: 35px;
  flex: none;
  display: flex;
  align-items: center;
  background: #c5e0c6;
  padding: 0 12px;
  gap: 12px;
}

.tb-icon {
  width: 20px;
  height: 20px;
  flex: none;
  fill: #202124;
}

.tb-muted {
  fill: #7d8a7e;
  transform: scaleX(-1);
}

.omnibox {
  flex: 1;
  height: 29px;
  display: flex;
  align-items: center;
  background: #eff7f0;
  border-radius: 15px;
  padding: 0 8px 0 11px;
}

.omni-lock {
  width: 13px;
  height: 13px;
  fill: #4a544b;
  margin-right: 10px;
}

.omni-url {
  flex: 1;
  font-size: 13px;
  color: #5c665d;
  letter-spacing: 0.12px;
}

.omni-url b {
  font-weight: 400;
  color: #202124;
}

.omni-icon {
  width: 18px;
  height: 18px;
  fill: #3c4043;
  color: #5c665d;
  margin-left: 14px;
}

.tb-avatar {
  width: 22px;
  height: 22px;
  flex: none;
  margin: 0 -1px;
  border-radius: 50%;
  background: #8b6b61;
  color: #fff;
  font-size: 12px;
  text-align: center;
  line-height: 22px;
}

.bookmarks {
  height: 33px;
  flex: none;
  display: flex;
  align-items: center;
  background: #c5e0c6;
  border-bottom: 1px solid #93ab96;
  padding: 0 0 2px 15px;
  font-family: "Open Sans", sans-serif;
  font-size: 12px;
  letter-spacing: -0.3px;
  color: #3a453b;
}

.bm {
  display: flex;
  align-items: center;
  margin-right: 16px;
  gap: 8px;
}

.bm-wide {
  margin-right: 19px;
}

.bm svg {
  flex: none;
}

.bm-gmail {
  width: 15px;
  height: 12px;
}

.bm-yt {
  width: 16px;
  height: 12px;
}

.bm-icon {
  width: 15px;
  height: 15px;
}

/* gmail */
.gmail {
  flex: 1;
  min-height: 0;
  display: flex;
  font-family: Roboto, sans-serif;
}

.rail {
  width: 68px;
  flex: none;
  display: flex;
  flex-direction: column;
  align-items: center;
  background: #eaf1fb;
  padding-top: 21px;
}

.rail-burger {
  width: 24px;
  height: 24px;
  flex: none;
  fill: #444746;
  margin-bottom: 38px;
}

.rail-item {
  height: 64px;
  display: flex;
  flex-direction: column;
  align-items: center;
  font-size: 12px;
  color: #444746;
}

.rail-pill {
  width: 44px;
  height: 32px;
  display: flex;
  align-items: center;
  justify-content: center;
  border-radius: 16px;
  position: relative;
  margin-bottom: 2px;
}

.rail-pill svg {
  width: 20px;
  height: 20px;
  fill: #444746;
}

.rail-on {
  height: 63px;
  color: #1f1f1f;
}

.rail-on .rail-pill {
  background: #d3e3fd;
}

.rail-on .rail-pill svg {
  fill: #041e49;
}

.rail-badge {
  position: absolute;
  left: 20px;
  top: -4px;
  width: 27px;
  height: 16px;
  border-radius: 8px;
  background: #b3261e;
  color: #fff;
  font-size: 11px;
  font-weight: 700;
  text-align: center;
  line-height: 16px;
}

.sidebar {
  width: 256px;
  flex: none;
  padding-left: 12px;
  padding-top: 22px;
}

.brand {
  display: flex;
  align-items: center;
  height: 24px;
  padding-left: 11px;
  font-size: 22px;
  color: #5f6368;
  font-family: "Open Sans", sans-serif;
  letter-spacing: -0.2px;
}

.brand span {
  margin-top: -3px;
}

.brand-m {
  width: 30px;
  height: 22px;
  margin-right: 11px;
}

.compose {
  width: 138px;
  height: 56px;
  margin-top: 27px;
  display: flex;
  align-items: center;
  background: #c2e7ff;
  border-radius: 16px;
  padding-left: 14px;
  font-size: 14px;
  font-weight: 500;
  letter-spacing: 0.2px;
  color: #1c3a5a;
  gap: 14px;
}

.compose svg {
  width: 24px;
  height: 24px;
  fill: #111;
}

.folders {
  list-style: none;
  margin: 16px 0 0;
  padding: 0;
  width: 232px;
}

.folder {
  height: 32px;
  display: flex;
  align-items: center;
  padding: 0 12px 0 16px;
  font-size: 14px;
  letter-spacing: 0.25px;
  color: #444746;
  border-radius: 16px;
}

.folder svg {
  width: 20px;
  height: 20px;
  fill: #444746;
  margin-right: 16px;
}

.folder span {
  flex: 1;
}

.folder em {
  font-style: normal;
  font-size: 12px;
  letter-spacing: 0.6px;
}

.folder-on {
  background: #d3e3fd;
  color: #041e49;
  font-weight: 700;
}

.folder-on svg {
  fill: #041e49;
}

.folder-bold {
  font-weight: 700;
  color: #202124;
}

.folder-bold em {
  font-weight: 400;
  color: #444746;
}

.labels {
  width: 224px;
  margin-top: 27px;
  display: flex;
  align-items: center;
  justify-content: space-between;
  padding-left: 14px;
  font-size: 16px;
  letter-spacing: 0.2px;
  color: #444746;
}

.labels svg {
  width: 20px;
  height: 20px;
  fill: #444746;
}

.main {
  flex: 1;
  min-width: 0;
  display: flex;
  flex-direction: column;
}

.topbar {
  height: 65px;
  flex: none;
  display: flex;
  align-items: center;
  padding: 8px 16px 9px 0;
}

.searchbox {
  width: 606px;
  height: 48px;
  display: flex;
  align-items: center;
  background: #e9f0fa;
  border-radius: 24px;
  padding: 0 16px 0 12px;
}

.search-icon {
  width: 24px;
  height: 24px;
  fill: #444746;
}

.search-text {
  flex: 1;
  margin-left: 8px;
  font-size: 16px;
  color: #5f6368;
}

.search-tune {
  width: 24px;
  height: 24px;
  fill: #444746;
}

.status {
  width: 102px;
  height: 48px;
  margin-left: 31px;
  display: flex;
  align-items: center;
  background: #e9f0fa;
  border-radius: 24px;
  padding-left: 12px;
  font-size: 15px;
  color: #444746;
}

.status-dot {
  width: 12px;
  height: 12px;
  border-radius: 50%;
  background: #188038;
  margin-right: 8px;
}

.status svg {
  width: 14px;
  height: 14px;
  margin-left: 5px;
  fill: #5f6368;
}

.top-icon {
  width: 24px;
  height: 24px;
  flex: none;
  fill: #505356;
  margin-left: 20px;
}

.status + .top-icon {
  margin-left: 22px;
}

.account {
  width: 134px;
  height: 48px;
  margin-left: 20px;
  display: flex;
  align-items: center;
  background: #fff;
  border: 1px solid #dadce0;
  border-radius: 8px;
  padding: 0 5px 0 10px;
}

.alu-logo {
  flex: 1;
  margin-top: 4px;
  font-family: "Liberation Sans", sans-serif;
  font-weight: 700;
  font-size: 36px;
  line-height: 30px;
  background: linear-gradient(180deg, #dc2536 0 50%, #fff 50% 54%, #7a8a94 54%);
  -webkit-background-clip: text;
  background-clip: text;
  color: transparent;
}

.account-avatar {
  width: 32px;
  height: 32px;
  flex: none;
  border-radius: 50%;
  background: #8d6e63;
  color: #fff;
  text-align: center;
  line-height: 32px;
  font-size: 16px;
}

.content {
  flex: 1;
  min-height: 0;
  display: flex;
  padding-bottom: 17px;
}

.card {
  width: 986px;
  flex: none;
  display: flex;
  background: #fff;
  border-radius: 16px;
  overflow: hidden;
  position: relative;
}

.card-left {
  flex: 1;
  min-width: 0;
  display: flex;
  flex-direction: column;
}

.msg-tools {
  height: 49px;
  flex: none;
  display: flex;
  align-items: center;
  gap: 24px;
  padding: 0 12px 1px 16px;
  margin-right: 9px;
  border-bottom: 1px solid #e8eaed;
}

.msg-tools svg {
  width: 20px;
  height: 20px;
  flex: none;
  fill: #444746;
}

.msg-tools .t-first {
  margin-left: 12px;
}

.t-sep {
  width: 1px;
  height: 20px;
  background: #e6e8ea;
  margin: 0 -4px 0 -5px;
}

.msg-tools .t-more {
  margin-left: -4px;
}

.t-count {
  margin-left: auto;
  margin-right: -4px;
  font-size: 12px;
  letter-spacing: -0.3px;
  color: #5f6368;
}

.msg-tools .t-nav + .t-nav {
  margin-left: -4px;
}

.msg-body {
  flex: 1;
  min-height: 0;
  overflow: hidden;
  padding: 9px 32px 0 78px;
  font-family: "DejaVu Sans", sans-serif;
  font-size: 13px;
  line-height: 20px;
  letter-spacing: 0.19px;
  color: #222;
}

.msg-body b {
  margin-left: -1px;
  letter-spacing: 0.12px;
  color: #111;
}

.msg-body p {
  margin: 0;
}

.msg-body a {
  color: #1155cc;
}

.msg-body .p-intro {
  line-height: 27px;
  margin-top: 2px;
  letter-spacing: 0.25px;
}

.msg-body .p-head {
  margin: 13px 0 0 39px;
}

.msg-body .p-head-b {
  margin-top: 12px;
}

.msg-body .p-indent {
  margin: 13px 0 0 48px;
  line-height: 19px;
}

.msg-body .p-or {
  margin-top: 13px;
}

.docs {
  margin: 13px 0 0;
  padding-left: 95px;
}

.msg-body .p-wide {
  margin-top: 13px;
}

.msg-body .p-sign {
  margin-top: 13px;
  line-height: 18px;
}

.scroll-track {
  width: 11px;
  flex: none;
  padding-top: 153px;
}

.scroll-thumb {
  height: 206px;
  background: #c4c4c4;
}

/* marca roja sobre el correo */
.red-mark {
  position: absolute;
  left: 304px;
  top: 301px;
  width: 60px;
  height: 36px;
  fill: none;
  stroke: #d6202c;
  stroke-width: 4px;
}

.addons {
  flex: 1;
  display: flex;
  flex-direction: column;
  align-items: center;
  padding-top: 18px;
}

.addon {
  width: 20px;
  height: 20px;
  flex: none;
}

.addon-keep {
  margin-top: 36px;
}

.addon-tasks {
  margin-top: 32px;
}

.addon-people {
  margin-top: 40px;
}

.cal-num {
  font-family: Roboto, sans-serif;
  font-size: 8px;
  font-weight: 700;
  fill: #4285f4;
  text-anchor: middle;
}

.addon-sep {
  width: 20px;
  height: 1px;
  flex: none;
  background: #dfe2e6;
  margin-top: 26px;
}

.addon-plus {
  width: 24px;
  height: 24px;
  flex: none;
  margin-top: 40px;
  fill: #1f1f1f;
}

.addon-more {
  width: 20px;
  height: 20px;
  flex: none;
  margin-top: auto;
  margin-bottom: 1px;
  fill: #1f1f1f;
}

/* barra de tareas */
.taskbar {
  height: 48px;
  flex: none;
  display: flex;
  align-items: center;
  background: #cfe3ee;
  border-top: 1px solid #a9bfcc;
}

.weather {
  width: 121px;
  flex: none;
  align-self: stretch;
  position: relative;
}

.sun {
  position: absolute;
  left: 12px;
  top: 13px;
  width: 20px;
  height: 22px;
  border-radius: 50%;
  background: #ef8b22;
}

.temp {
  position: absolute;
  left: 19px;
  top: 5px;
  width: 23px;
  height: 19px;
  border-radius: 9px;
  background: #fff;
  font-family: "Open Sans", sans-serif;
  font-size: 10px;
  line-height: 18px;
  text-align: center;
  color: #222;
}

.start {
  width: 24px;
  height: 24px;
  flex: none;
  margin-right: 13px;
}

.tb-search {
  width: 217px;
  height: 28px;
  flex: none;
  display: flex;
  align-items: center;
  background: #edf6fa;
  border-radius: 14px;
  border: 1px solid #bdd0da;
  padding: 0 4px 0 9px;
  font-family: "Open Sans", sans-serif;
  font-size: 13px;
  color: #4a5258;
}

.tb-search svg {
  width: 18px;
  height: 18px;
  fill: #222;
  margin-right: 8px;
}

.tb-search span {
  flex: 1;
}

.tb-search .bing {
  width: 20px;
  height: 22px;
  margin: 0;
}

.bing-b {
  font-family: "Liberation Sans", sans-serif;
  font-size: 15px;
  font-weight: 700;
  fill: #1a73c8;
  text-anchor: middle;
}

.apps {
  display: flex;
  align-items: center;
  margin-left: 4px;
}

.app {
  width: 44px;
  height: 44px;
  flex: none;
  display: flex;
  align-items: center;
  justify-content: center;
  position: relative;
}

.app svg {
  width: 24px;
  height: 24px;
}

.app-run::after {
  content: "";
  position: absolute;
  bottom: 2px;
  left: 19px;
  width: 6px;
  height: 3px;
  border-radius: 2px;
  background: #76858d;
}

.app-snip {
  width: 38px;
  margin-left: 3px;
  height: 45px;
  background: #e3eff6;
  border-radius: 4px;
}

.snip-line {
  position: absolute;
  bottom: 2px;
  left: 11px;
  width: 16px;
  height: 3px;
  border-radius: 2px;
  background: #0067c0;
}

.app-badge {
  position: absolute;
  left: 23px;
  top: 5px;
  width: 14px;
  height: 14px;
  border-radius: 50%;
  background: #e8473f;
  color: #fff;
  font-family: "Open Sans", sans-serif;
  font-size: 10px;
  line-height: 14px;
  text-align: center;
}

.app-badge-m {
  width: 16px;
  height: 16px;
  top: 3px;
  background: #8b6b61;
  font-weight: 400;
  font-size: 9px;
  line-height: 16px;
}

.word-w {
  font-family: "Liberation Sans", sans-serif;
  font-size: 10px;
  font-weight: 700;
  fill: #fff;
  text-anchor: middle;
}

.myhp {
  font-family: "Liberation Serif", serif;
  font-size: 8.5px;
  font-style: italic;
  fill: #fff;
  text-anchor: middle;
}

.help-q {
  font-family: "Liberation Sans", sans-serif;
  font-size: 18px;
  font-weight: 700;
  fill: #fff;
  text-anchor: middle;
}

.pc-txt {
  font-family: "Liberation Sans", sans-serif;
  font-size: 8px;
  font-weight: 700;
  fill: #fff;
}

.tray {
  flex: 1;
  display: flex;
  align-items: center;
  color: #222;
  font-family: "Open Sans", sans-serif;
  font-size: 12px;
}

.tray-caret {
  width: 12px;
  height: 12px;
  margin-left: 27px;
  fill: none;
  stroke: #222;
  stroke-width: 1.4;
}

.tray-lang {
  width: 30px;
  margin-left: 16px;
  line-height: 20px;
  text-align: center;
}

.tray-icon {
  width: 18px;
  height: 18px;
  margin-left: 5px;
  fill: none;
  stroke: #222;
  stroke-width: 1.2;
}

.tray-lang + .tray-icon {
  margin-left: 14px;
}

.tray-clock {
  width: 70px;
  margin-left: 9px;
  text-align: right;
  line-height: 20px;
}

.tray-badge {
  width: 15px;
  height: 15px;
  margin-left: 7px;
  border-radius: 50%;
  background: #0a5cb0;
  color: #fff;
  font-size: 10px;
  line-height: 15px;
  text-align: center;
}
```
